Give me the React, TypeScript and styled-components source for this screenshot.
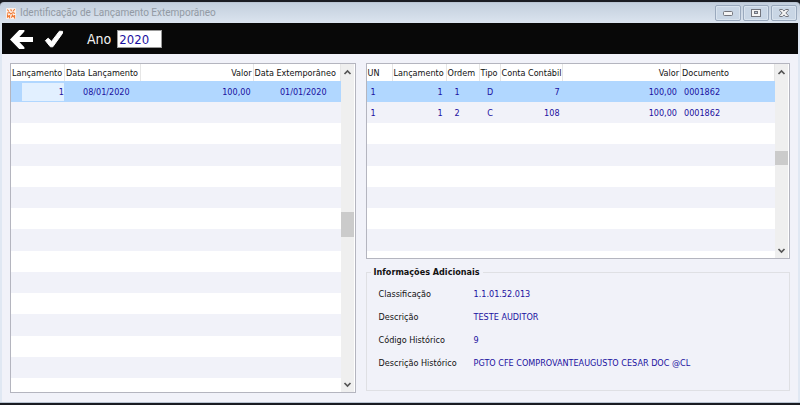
import React from 'react';
import styled, { createGlobalStyle, css } from 'styled-components';

const GlobalStyle = createGlobalStyle`
  *, *::before, *::after { box-sizing: border-box; }
  body {
    margin: 0;
    background: #17191d;
    font-family: "DejaVu Sans Condensed", "Noto Sans", sans-serif;
    font-size: 9px;
    line-height: 12px;
    color: #111;
  }
  button, input { font: inherit; }
`;

const Window = styled.div`
  display: flex;
  flex-direction: column;
  height: 100vh;
  border: solid #1a1c22;
  border-width: 2px 0 2px;
`;

const Frame = styled.div`
  flex: 1;
  min-height: 0;
  display: flex;
  flex-direction: column;
  border: 1px solid #b9c4d2;
  border-width: 1px 0;
  border-radius: 4px 4px 0 0;
  background: linear-gradient(#c3cfdd, #dbe4ef 20px, #e0e8f3 60px);
  padding: 0 2px;
  overflow: hidden;
`;

const TitleBar = styled.header`
  display: flex;
  align-items: center;
  height: 20px;
  padding: 0 1px 0 4px;
  gap: 4px;
  flex: none;
`;

const Title = styled.h1`
  flex: 1;
  margin: 0;
  font: 400 10px/14px Roboto, "Noto Sans", sans-serif;
  color: #929aa4;
  white-space: nowrap;
`;

const Captions = styled.div`
  display: flex;
  gap: 2px;
`;

const CaptionButton = styled.button`
  display: grid;
  place-items: center;
  width: 26px;
  height: 16px;
  padding: 0;
  border: 1px solid #9aa9bd;
  border-radius: 2px;
  background: #c9d6e5;
  box-shadow: inset 0 0 0 1px #d9e3ee;
`;

const ToolBar = styled.div`
  display: flex;
  align-items: center;
  flex: none;
  height: 31px;
  padding-left: 7px;
  background: #080808;
`;

const ToolButton = styled.button`
  display: grid;
  place-items: center;
  width: 24px;
  height: 22px;
  margin-right: 9px;
  padding: 0;
  border: 0;
  background: none;
`;

const YearLabel = styled.label`
  margin-left: 12px;
  font-size: 14px;
  line-height: 18px;
  color: #f2f2f2;
`;

const YearInput = styled.input`
  width: 45px;
  height: 18px;
  margin-left: 6px;
  padding: 2px 1px 0;
  border: 1px solid #999;
  background: #fff;
  color: #1a10a0;
  font-size: 13px;
  line-height: 16px;
`;

const Content = styled.main`
  flex: 1;
  min-height: 0;
  display: grid;
  grid-template-columns: minmax(0, 346fr) minmax(0, 425fr);
  gap: 10px;
  padding: 9px 8px 9px 8px;
  background: #f1f2f9;
`;

const Side = styled.div`
  display: flex;
  flex-direction: column;
  min-height: 0;
`;

const Panel = styled.section`
  flex: 1;
  min-height: 0;
  display: flex;
  padding-right: 1px;
  border: 1px solid #b4b5bf;
  background: #fff;
`;

const Viewport = styled.div`
  flex: 1;
  min-width: 0;
  overflow: hidden;
`;

const Table = styled.table`
  width: 100%;
  table-layout: fixed;
  border-collapse: separate;
  border-spacing: 0;
`;

const Col = styled.col<{ $w?: number }>`
  ${(p) => p.$w && css`width: ${p.$w}px;`}
`;

type Align = 'left' | 'right' | 'center';

const HeadCell = styled.th<{ $align?: Align }>`
  height: 17px;
  padding: 0 1px;
  border-right: 1px solid #e6e6e6;
  font-weight: 400;
  text-align: ${(p) => p.$align ?? 'left'};
  white-space: nowrap;
`;

const Row = styled.tr<{ $selected?: boolean }>`
  height: 21px;
  color: #1a10a0;
  &:nth-child(even) { background: #f1f2f9; }
  &:nth-child(4n) { height: 22px; }
  ${(p) => p.$selected && css`background: #b1d7ff;`}
`;

const Cell = styled.td<{ $align?: Align; $inset?: number }>`
  padding: 0 ${(p) => p.$inset ?? 3}px;
  text-align: ${(p) => p.$align ?? 'left'};
  white-space: nowrap;
`;

const FocusBox = styled.span`
  display: block;
  height: 18px;
  margin-left: 10px;
  background: #e2f0ff;
  line-height: 19px;
`;

const Bar = styled.div`
  display: flex;
  flex-direction: column;
  width: 13px;
  background: #efefef;
`;

const BarButton = styled.button`
  display: grid;
  place-items: center;
  width: 13px;
  height: 16px;
  padding: 0;
  border: 0;
  background: none;
`;

const Space = styled.div<{ $grow: number }>`
  flex: ${(p) => p.$grow} 1 0;
`;

const Thumb = styled.div<{ $size: number }>`
  height: ${(p) => p.$size}px;
  background: #cbcbcb;
`;

const Group = styled.fieldset`
  min-width: 0;
  margin: 7px 0 2px;
  padding: 4px 12px 16px;
  border: 1px solid #dfe0e4;
`;

const Legend = styled.legend`
  margin-left: -8px;
  padding: 0 3px;
  font-weight: 700;
  line-height: 12px;
`;

const Fields = styled.dl`
  display: grid;
  grid-template-columns: 95px minmax(0, 1fr);
  grid-auto-rows: 23px;
  align-items: center;
  margin: 0;
  white-space: nowrap;
`;

const Term = styled.dt``;

const Value = styled.dd`
  margin: 0;
  color: #1a10a0;
`;

function Scrollbar({ before, size, after }: { before: number; size: number; after: number }) {
  return (
    <Bar>
      <BarButton aria-label="Rolar para cima">
        <svg width="9" height="7" viewBox="0 0 9 7" fill="none" stroke="#555" strokeWidth="1.7">
          <path d="M1.5 5 4.5 2 7.5 5" />
        </svg>
      </BarButton>
      <Space $grow={before} />
      <Thumb $size={size} />
      <Space $grow={after} />
      <BarButton aria-label="Rolar para baixo">
        <svg width="9" height="7" viewBox="0 0 9 7" fill="none" stroke="#555" strokeWidth="1.7">
          <path d="M1.5 2 4.5 5 7.5 2" />
        </svg>
      </BarButton>
    </Bar>
  );
}

function BlankRows({ count, span }: { count: number; span: number }) {
  return (
    <>
      {Array.from({ length: count }, (_, i) => (
        <Row key={i}>
          <Cell colSpan={span} />
        </Row>
      ))}
    </>
  );
}

const entries = [
  { un: '1', lancamento: '1', ordem: '1', tipo: 'D', conta: '7', valor: '100,00', documento: '0001862' },
  { un: '1', lancamento: '1', ordem: '2', tipo: 'C', conta: '108', valor: '100,00', documento: '0001862' },
];

const details = [
  ['Classificação', '1.1.01.52.013'],
  ['Descrição', 'TESTE AUDITOR'],
  ['Código Histórico', '9'],
  ['Descrição Histórico', 'PGTO CFE COMPROVANTEAUGUSTO CESAR DOC @CL'],
];

export default function App() {
  return (
    <>
      <GlobalStyle />
      <Window>
        <Frame>
          <TitleBar>
            <svg width="10" height="11" viewBox="0 0 10 11" aria-hidden="true">
              <rect width="10" height="11" rx="1" fill="#fbf1ea" />
              <path
                d="M1.2 1.5 3 3.5M4.7 1.2 5.5 3.2M8.8 1.2 6.8 3.5M1 5.2 3.5 4.5 4.8 6 7 4.6 9 5.5M1.5 9.8V7L3.6 9.6V7M5.4 9.8 6.5 7 8.6 9.8V7"
                fill="none"
                stroke="#f07a35"
                strokeWidth="1.1"
              />
            </svg>
            <Title>Identificação de Lançamento Extemporâneo</Title>
            <Captions>
              <CaptionButton aria-label="Minimizar">
                <svg width="10" height="5" viewBox="0 0 10 5">
                  <rect x="0.5" y="0.5" width="9" height="4" rx="1" fill="#f4f4f4" stroke="#73757d" />
                </svg>
              </CaptionButton>
              <CaptionButton aria-label="Maximizar">
                <svg width="10" height="8" viewBox="0 0 10 8">
                  <rect x="0.5" y="0.5" width="9" height="7" fill="#f4f4f4" stroke="#73757d" />
                  <rect x="3.5" y="2.5" width="3" height="2" fill="#b8c6d8" stroke="#73757d" />
                </svg>
              </CaptionButton>
              <CaptionButton aria-label="Fechar">
                <svg width="10" height="8" viewBox="0 0 10 8">
                  <path
                    d="M.7.5H3.4L5 2.1 6.6.5H9.3V1.5L6.8 4 9.3 6.5V7.5H6.6L5 5.9 3.4 7.5H.7V6.5L3.2 4 .7 1.5Z"
                    fill="#f4f4f4"
                    stroke="#73757d"
                  />
                </svg>
              </CaptionButton>
            </Captions>
          </TitleBar>

          <ToolBar>
            <ToolButton aria-label="Voltar">
              <svg width="24" height="20" viewBox="0 0 24 20" fill="#fff">
                <path d="M1 10.5 10.2 1H15.4V2.6L10.4 8H24V13H10.4L15.4 18.2V20H10.2Z" />
              </svg>
            </ToolButton>
            <ToolButton aria-label="Confirmar">
              <svg width="20" height="18" viewBox="0 0 20 18" fill="#fff" stroke="#fff" strokeLinejoin="round">
                <path d="M1.4 10.6 4.2 8.2 7.6 11.4 15.4 1.2 18.6 1.4 18.4 3.4 8.8 16.8H6.4Z" />
              </svg>
            </ToolButton>
            <YearLabel htmlFor="ano">Ano</YearLabel>
            <YearInput id="ano" defaultValue="2020" />
          </ToolBar>

          <Content>
            <Side>
              <Panel>
                <Viewport>
                  <Table>
                    <colgroup>
                      <Col $w={54} />
                      <Col $w={76} />
                      <Col />
                      <Col $w={87} />
                    </colgroup>
                    <thead>
                      <tr>
                        <HeadCell>Lançamento</HeadCell>
                        <HeadCell>Data Lançamento</HeadCell>
                        <HeadCell $align="right">Valor</HeadCell>
                        <HeadCell>Data Extemporâneo</HeadCell>
                      </tr>
                    </thead>
                    <tbody>
                      <Row $selected>
                        <Cell $align="right" $inset={1}>
                          <FocusBox>1</FocusBox>
                        </Cell>
                        <Cell $inset={18}>08/01/2020</Cell>
                        <Cell $align="right">100,00</Cell>
                        <Cell $align="right" $inset={14}>01/01/2020</Cell>
                      </Row>
                      <BlankRows count={18} span={4} />
                    </tbody>
                  </Table>
                </Viewport>
                <Scrollbar before={132} size={25} after={138} />
              </Panel>
            </Side>

            <Side>
              <Panel>
                <Viewport>
                  <Table>
                    <colgroup>
                      <Col $w={26} />
                      <Col $w={54} />
                      <Col $w={33} />
                      <Col $w={21} />
                      <Col $w={62} />
                      <Col />
                      <Col $w={94} />
                    </colgroup>
                    <thead>
                      <tr>
                        <HeadCell>UN</HeadCell>
                        <HeadCell>Lançamento</HeadCell>
                        <HeadCell>Ordem</HeadCell>
                        <HeadCell>Tipo</HeadCell>
                        <HeadCell>Conta Contábil</HeadCell>
                        <HeadCell $align="right">Valor</HeadCell>
                        <HeadCell>Documento</HeadCell>
                      </tr>
                    </thead>
                    <tbody>
                      {entries.map((e, i) => (
                        <Row key={e.ordem} $selected={i === 0}>
                          <Cell $inset={4}>{e.un}</Cell>
                          <Cell $align="right" $inset={4}>{e.lancamento}</Cell>
                          <Cell $inset={8}>{e.ordem}</Cell>
                          <Cell $align="center">{e.tipo}</Cell>
                          <Cell $align="right">{e.conta}</Cell>
                          <Cell $align="right" $inset={4}>{e.valor}</Cell>
                          <Cell>{e.documento}</Cell>
                        </Row>
                      ))}
                      <BlankRows count={12} span={7} />
                    </tbody>
                  </Table>
                </Viewport>
                <Scrollbar before={71} size={14} after={78} />
              </Panel>
              <Group>
                <Legend>Informações Adicionais</Legend>
                <Fields>
                  {details.map(([label, value]) => (
                    <React.Fragment key={label}>
                      <Term>{label}</Term>
                      <Value>{value}</Value>
                    </React.Fragment>
                  ))}
                </Fields>
              </Group>
            </Side>
          </Content>
        </Frame>
      </Window>
    </>
  );
}
